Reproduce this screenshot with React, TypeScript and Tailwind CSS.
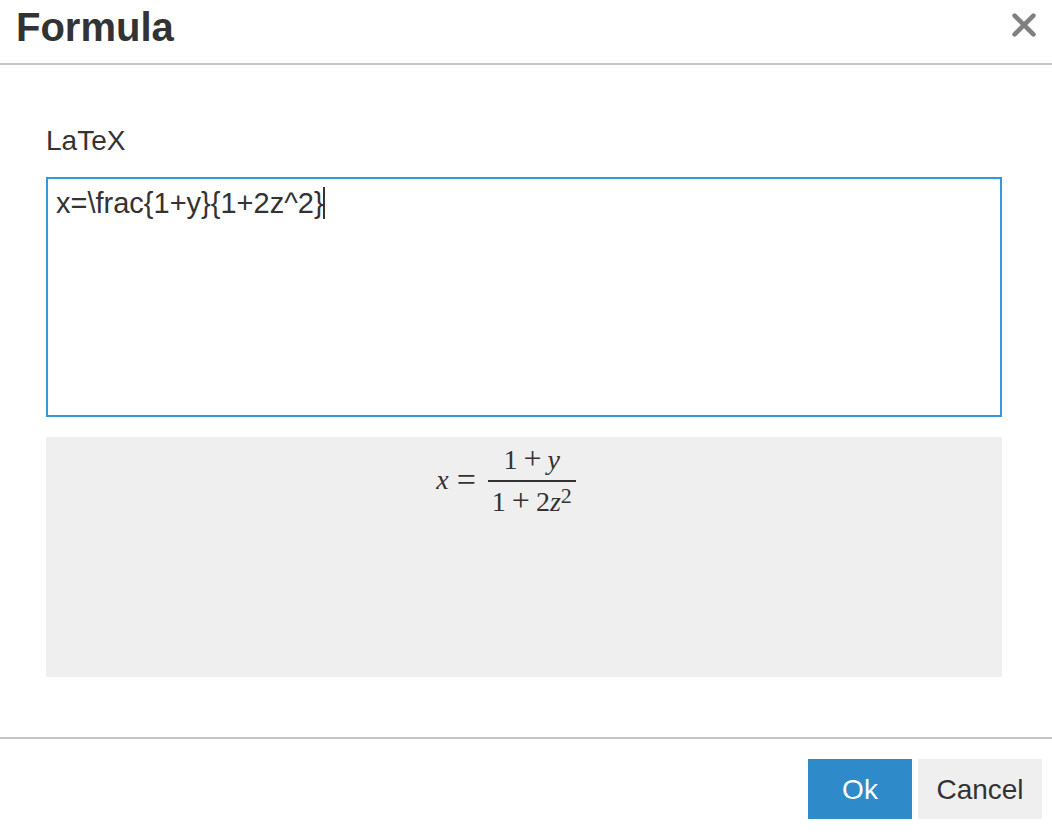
import { useState } from "react";

function CloseIcon() {
  return (
    <svg width="24" height="24" viewBox="0 0 24 24" aria-hidden="true">
      <path
        d="M2.6 2.6L21.4 21.4M21.4 2.6L2.6 21.4"
        stroke="#808080"
        strokeWidth="4.6"
        strokeLinecap="round"
        fill="none"
      />
    </svg>
  );
}

function FormulaPreview() {
  return (
    <div
      aria-label="Preview"
      className="mt-5 flex h-60 items-start justify-center bg-[#efefef] pr-9 font-['Liberation_Serif',serif] text-[28px] leading-7"
    >
      <div className="flex items-center pt-[7px]">
        <i>x</i>
        <span className="mx-2 text-[34px]">=</span>
        <div className="ml-1 flex flex-col items-center">
          <div className="flex h-9 items-baseline gap-1.5">
            <span>1</span>
            <span className="text-[32px]">+</span>
            <i>y</i>
          </div>
          <div className="flex h-9 items-baseline gap-1.5 border-t-2 border-[#333] px-1 pt-1">
            <span>1</span>
            <span className="text-[32px]">+</span>
            <span className="flex">
              2<i>z</i>
              <span className="text-[22px] leading-4">2</span>
            </span>
          </div>
        </div>
      </div>
    </div>
  );
}

export default function App() {
  const [latex, setLatex] = useState("x=\\frac{1+y}{1+2z^2}");

  return (
    <div
      role="dialog"
      aria-labelledby="title"
      className="min-h-screen bg-white font-['Liberation_Sans',Arial,sans-serif] text-[28px] text-[#333]"
    >
      <header className="flex h-[65px] items-start justify-between border-b-2 border-[#c4c4c4] px-4">
        <h1 id="title" className="pt-1 text-[40px] leading-[46px] font-bold">
          Formula
        </h1>
        <button type="button" aria-label="Close" className="mt-[13px]">
          <CloseIcon />
        </button>
      </header>

      <main className="pt-[60px] pr-[50px] pb-[60px] pl-[46px]">
        <label htmlFor="latex" className="block leading-8">
          LaTeX
        </label>
        <div className="relative mt-5 flex text-[29px] leading-8">
          <textarea
            id="latex"
            value={latex}
            spellCheck={false}
            onChange={(e) => setLatex(e.target.value)}
            className="h-60 w-full resize-none border-2 border-[#3498db] bg-white px-2 py-2 caret-transparent outline-none"
          />
          <span aria-hidden="true" className="absolute top-2.5 left-[277px] h-8 w-0.5 bg-[#333]" />
        </div>
        <FormulaPreview />
      </main>

      <footer className="flex justify-end gap-1.5 border-t-2 border-[#c4c4c4] px-2.5 pt-5 pb-4">
        <button type="button" className="h-[60px] w-[104px] bg-[#2e8ac8] pt-0.5 text-white">
          Ok
        </button>
        <button type="button" className="h-[60px] w-[124px] bg-[#efefef] pt-0.5">
          Cancel
        </button>
      </footer>
    </div>
  );
}
